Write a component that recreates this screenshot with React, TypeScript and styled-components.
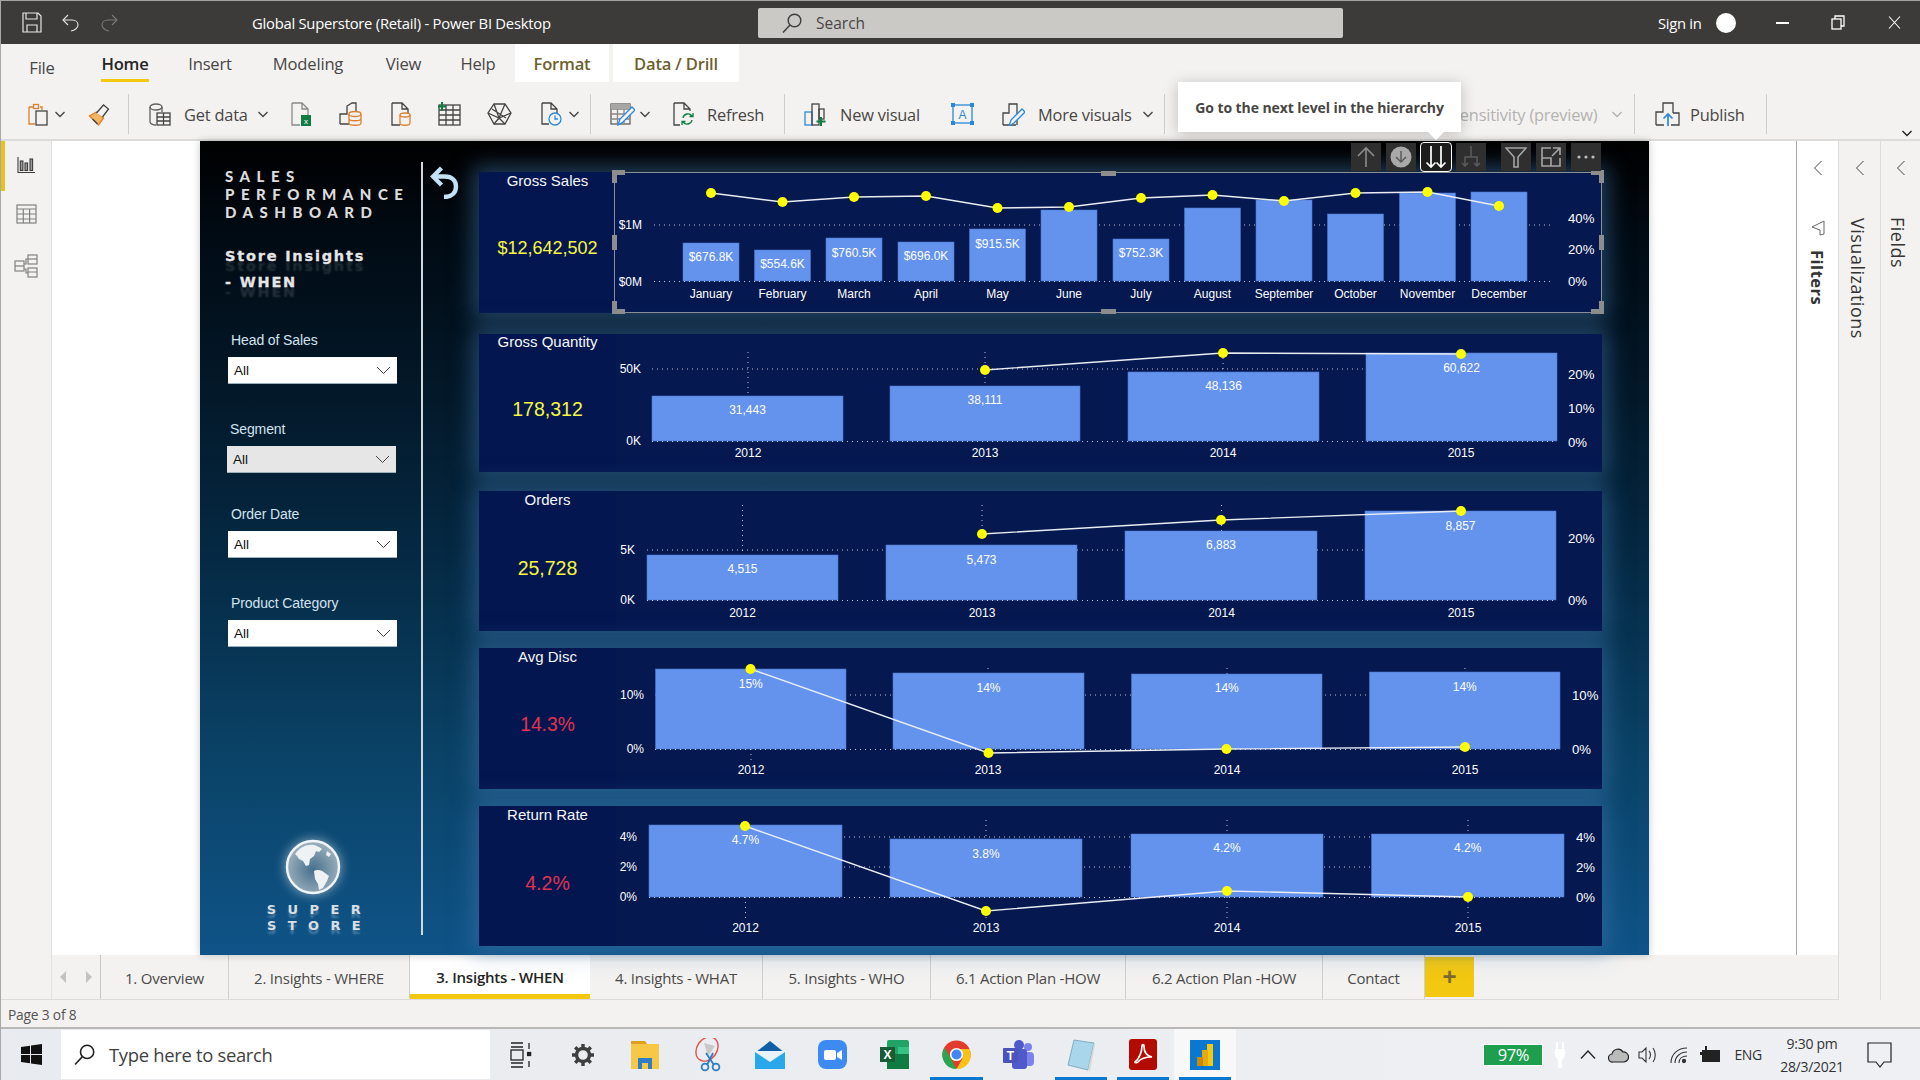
import React from "react";
import styled, { createGlobalStyle } from "styled-components";

const UI = `"Open Sans", "Noto Sans", sans-serif`;
const ARIAL = `"Liberation Sans", Arial, sans-serif`;

const Global = createGlobalStyle`
  html, body { margin: 0; padding: 0; width: 1920px; height: 1080px; overflow: hidden; background: #f3f2f1; }
  * { box-sizing: border-box; }
`;

const Frame = styled.div`
  width: 1920px; height: 1080px; display: flex; flex-direction: column;
  border-top: 1px solid #a3a3a3; border-left: 1px solid #a8a8a8; font-family: ${UI}; color: #3b3a39; overflow: hidden;
`;

/* ---------- title bar ---------- */
const TitleBar = styled.header`
  height: 43px; flex: none; background: #3c3b39; color: #fff; display: flex; align-items: center; position: relative;
`;
const QuickIcon = styled.span<{ $ml: number }>`
  margin-left: ${p => p.$ml}px; display: flex;
`;
const AppTitle = styled.span`
  margin-left: 134px; width: 400px; font-size: 14.8px; letter-spacing: -0.25px; white-space: nowrap;
`;
const SearchBox = styled.div`
  margin-left: 106px; width: 585px; height: 30px; background: #cbc9c6; border-radius: 2px; display: flex; align-items: center;
  padding-left: 24px; gap: 14px; color: #474747; font-size: 15.5px;
`;
const SignIn = styled.span`
  margin-left: 315px; font-size: 14.8px; letter-spacing: -0.3px; width: 57px;
`;
const Avatar = styled.span`
  width: 20px; height: 20px; border-radius: 50%; background: #fff; margin-left: 1px;
`;
const WinBtn = styled.span<{ $ml: number }>`
  margin-left: ${p => p.$ml}px; display: flex;
`;

/* ---------- ribbon ---------- */
const RibbonTabs = styled.nav`
  height: 38px; flex: none; display: flex; background: #f3f2f1;
`;
const RibbonTab = styled.span<{ $ml: number; $w: number; $ctx?: boolean; $on?: boolean; $low?: boolean }>`
  margin-left: ${p => p.$ml}px; width: ${p => p.$w}px; flex: none; height: 38px; display: flex; align-items: center; justify-content: center;
  font-size: 16.6px; letter-spacing: -0.2px; position: relative;
  padding-top: ${p => (p.$low ? 8 : 0)}px;
  background: ${p => (p.$ctx ? "#fff" : "transparent")};
  color: ${p => (p.$ctx ? "#6e5f2f" : p.$on ? "#252423" : "#484644")};
  font-weight: ${p => (p.$ctx || p.$on ? 600 : 400)};
  ${p => p.$on && `&::after{content:"";position:absolute;left:0;right:0;bottom:0;height:3px;background:#f2c811;}`}
`;
const Toolbar = styled.div`
  height: 59px; flex: none; display: flex; align-items: center; padding-top: 7px; background: #f3f2f1;
  border-bottom: 2px solid #dcdcdc; position: relative;
`;
const Tool = styled.span<{ $ml: number; $w?: number; $dim?: boolean; $end?: boolean }>`
  margin-left: ${p => p.$ml}px; ${p => (p.$w ? `width:${p.$w}px;` : "")} flex: none; display: flex; align-items: center;
  ${p => (p.$end ? "align-self: flex-end;" : "")}
  font-size: 16.4px; letter-spacing: -0.2px; white-space: nowrap; color: ${p => (p.$dim ? "#b4b2b0" : "#484644")};
`;
const Sep = styled.i<{ $ml: number }>`
  margin-left: ${p => p.$ml}px; width: 1px; height: 40px; background: #cfcdcb; flex: none;
`;
const Tooltip = styled.div`
  position: absolute; left: 1177px; top: 0; width: 283px; height: 50px; background: #fff; display: flex; align-items: center; justify-content: center;
  font-size: 14px; font-weight: 700; letter-spacing: -0.08px; color: #484644; box-shadow: 0 2px 14px rgba(0,0,0,.22); white-space: nowrap; z-index: 5;
  &::after { content: ""; position: absolute; left: 250px; top: 50px; border: 8px solid transparent; border-top-color: #fff; border-bottom: 0; }
`;

/* ---------- body ---------- */
const Body = styled.div`
  height: 859px; flex: none; display: flex;
`;
const MainColumn = styled.div`
  width: 1837px; flex: none; display: flex; flex-direction: column;
`;
const Upper = styled.div`
  height: 814px; flex: none; display: flex;
`;
const Rail = styled.aside`
  width: 51px; flex: none; background: #f3f2f1; border-right: 1px solid #e1dfdd; position: relative; display: flex; flex-direction: column; align-items: center; padding-top: 15px; gap: 30px;
  &::before { content: ""; position: absolute; left: 0; top: 0; width: 4px; height: 50px; background: #e8c31f; }
`;
const Work = styled.main`
  flex: 1; background: #fff; padding-left: 148px; display: flex;
`;
const Canvas = styled.section`
  width: 1449px; height: 814px; flex: none; position: relative; display: flex;
  background: linear-gradient(180deg, #000 0, #010b14 12%, #03192a 32%, #052a45 52%, #0a4266 75%, #0f5488 100%);
  box-shadow: 0 0 8px rgba(0,0,0,.22);
`;
const Sidebar = styled.div`
  width: 221px; flex: none; padding: 26px 0 0 25px; display: flex; flex-direction: column;
`;
const Headline = styled.div`
  font-family: Lato, "Open Sans", sans-serif; font-weight: 900; font-size: 15px; line-height: 18px; letter-spacing: 6.5px; color: #dcdcdc; white-space: nowrap;
`;
const SubHead = styled.div`
  margin-top: 22px; font-family: "DejaVu Sans", sans-serif; font-weight: 700; font-size: 14.5px; line-height: 26px; letter-spacing: 1.8px; color: #e6e6e6; white-space: nowrap;
  -webkit-text-stroke: 0.3px #e6e6e6; text-shadow: 0 10px 2px rgba(255,255,255,.14);
`;
const Slicer = styled.div<{ $mt: number; $nudge?: number }>`
  margin-top: ${p => p.$mt}px; margin-left: ${p => 3 + (p.$nudge ?? 0)}px; width: 169px;
`;
const SlicerLabel = styled.div`
  font-family: ${ARIAL}; font-size: 14px; line-height: 18px; padding-left: 3px; letter-spacing: -0.1px; color: #d3e3ef; white-space: nowrap;
`;
const SlicerBox = styled.div<{ $grey?: boolean }>`
  margin-top: 8px; height: 27px; background: ${p => (p.$grey ? "#e6e6e6" : "#fff")}; display: flex; align-items: center; justify-content: space-between;
  padding: 0 6px; font-family: ${ARIAL}; font-size: 13.5px; color: #111; border-bottom: 1px solid #9fb0bd;
`;
const Logo = styled.div`
  margin-top: 190px; margin-left: -10px; display: flex; flex-direction: column; align-items: center; width: 196px;
`;
const GlobeWrap = styled.span`
  display: flex; filter: drop-shadow(0 0 6px rgba(255,255,255,.55));
`;
const LogoWord = styled.div<{ $first?: boolean }>`
  margin-top: ${p => (p.$first ? 5 : 0)}px; font-family: "DejaVu Sans", sans-serif; font-weight: 700; font-size: 13px; line-height: 15.5px; letter-spacing: 11.4px; padding-left: 13px; color: #d9dfe3;
  text-shadow: 0 4px 2px rgba(255,255,255,.25);
`;
const Divider = styled.div`
  width: 2px; height: 773px; margin-top: 21px; flex: none; background: #cfd8de;
`;
const BackCol = styled.div`
  width: 56px; flex: none; padding: 25px 0 0 7px;
`;
const Rows = styled.div`
  width: 1123px; flex: none; padding-top: 31px; display: flex; flex-direction: column;
`;
const Row = styled.article<{ $h: number; $mt: number }>`
  height: ${p => p.$h}px; margin-top: ${p => p.$mt}px; flex: none; display: flex; position: relative;
  background: #051850; box-shadow: 0 0 20px 6px rgba(66,120,176,.5);
`;
const Kpi = styled.div`
  width: 137px; flex: none; display: flex; flex-direction: column; align-items: center; font-family: ${ARIAL}; background: #041650;
`;
const KpiTitle = styled.div<{ $mt: number }>`
  margin-top: ${p => p.$mt}px; font-size: 15px; line-height: 18px; color: #f6f6f6; white-space: nowrap;
`;
const KpiValue = styled.div<{ $bad?: boolean; $s: number; $mt: number }>`
  margin-top: ${p => p.$mt}px; font-size: ${p => p.$s}px; line-height: 24px; color: ${p => (p.$bad ? "#e03350" : "#f6f73f")}; white-space: nowrap;
`;
const ChartSvg = styled.svg`
  display: block; flex: none; font-family: ${ARIAL}; font-size: 12px; fill: #fff;
`;
const Selection = styled.div`
  position: absolute; left: 135px; top: 0; right: 0; bottom: 0; border: 1.5px solid #8b8f98; pointer-events: none;
`;
const Handle = styled.i<{ $x: number; $y: number; $w: number; $h: number }>`
  position: absolute; left: ${p => p.$x}px; top: ${p => p.$y}px; width: ${p => p.$w}px; height: ${p => p.$h}px; background: #8d8d8d;
`;
const VisualHeader = styled.div`
  position: absolute; top: 2px; left: 1151px; display: flex; gap: 5px; z-index: 3;
`;
const HeadBtn = styled.span<{ $on?: boolean; $gap?: boolean }>`
  width: 30px; height: 28px; display: flex; align-items: center; justify-content: center; background: #2f2f2f;
  margin-left: ${p => (p.$gap ? 10 : 0)}px;
  ${p => p.$on && "background:#1d1d1d;outline:1px solid #fff;border-radius:3px;"}
`;
const FilterPanel = styled.aside`
  width: 42px; flex: none; background: #fff; border-left: 1px solid #a9a9a9; display: flex; flex-direction: column; align-items: center; padding-top: 19px;
`;
const FunnelSlot = styled.span`
  margin-top: 44px; display: flex;
`;
const SidePanel = styled.aside<{ $w: number }>`
  width: ${p => p.$w}px; flex: none; background: #f3f2f1; border-left: 1px solid #dedcda; display: flex; flex-direction: column; align-items: center; padding-top: 19px; height: 100%;
`;
const VText = styled.span<{ $mt: number; $bold?: boolean; $s?: number; $mr?: number }>`
  margin-top: ${p => p.$mt}px; margin-right: ${p => p.$mr ?? 0}px; writing-mode: vertical-rl; font-size: ${p => p.$s ?? 18}px; color: #333; font-weight: ${p => (p.$bold ? 700 : 500)}; letter-spacing: .5px; white-space: nowrap;
`;

/* ---------- tabs ---------- */
const PageTabs = styled.nav`
  height: 45px; flex: none; display: flex; background: #f3f2f1; border-bottom: 1px solid #dedcda; padding-left: 50px;
`;
const TabArrows = styled.div`
  width: 50px; flex: none; border-left: 1px solid #e3e1df; border-right: 1px solid #c9c7c5; display: flex; align-items: center; justify-content: center; gap: 20px;
`;
const PageTab = styled.span<{ $w: number; $on?: boolean }>`
  width: ${p => p.$w}px; flex: none; display: flex; align-items: center; justify-content: center; font-size: 15px; letter-spacing: -0.22px; white-space: nowrap; padding-top: 1px;
  border-right: 1px solid #d2d0ce; color: ${p => (p.$on ? "#252423" : "#4b4a48")}; font-weight: ${p => (p.$on ? 600 : 400)};
  ${p => p.$on && "background:#fff;border-bottom:5px solid #f2c811;padding-top:5px;border-right:0;"}
`;
const AddTab = styled.span`
  width: 49px; height: 40px; margin-top: 2px; background: #f2c811; color: #7d6a33; font-family: ${ARIAL}; font-size: 24px; font-weight: 700; display: flex; align-items: center; justify-content: center;
`;
const StatusBar = styled.div`
  height: 29px; flex: none; padding: 2px 0 0 7px; display: flex; align-items: center; font-size: 13.8px; letter-spacing: -0.2px; color: #545352; background: #f3f2f1; border-bottom: 2px solid #b9b8b7;
`;

/* ---------- taskbar ---------- */
const Taskbar = styled.footer`
  height: 50px; flex: 1; display: flex; align-items: stretch; background: linear-gradient(90deg, #e8ebef, #eef0f3);
`;
const StartBtn = styled.span`
  width: 60px; flex: none; display: flex; align-items: center; justify-content: center;
`;
const TaskSearch = styled.div`
  width: 429px; flex: none; background: #fff; margin: 1px 0; display: flex; align-items: center; padding-left: 13px; gap: 14px; font-size: 18.4px; letter-spacing: -0.3px; color: #3f3f3f;
`;
const TaskSlot = styled.span<{ $on?: boolean; $bar?: boolean }>`
  width: 62.2px; flex: none; display: flex; align-items: center; justify-content: center; position: relative;
  background: ${p => (p.$on ? "#f8f8f8" : "transparent")};
  ${p => p.$bar && `&::after{content:"";position:absolute;left:5px;right:5px;bottom:0;height:3px;background:#0a78d0;}`}
`;
const Tray = styled.div`
  margin-left: auto; display: flex; align-items: center; padding-right: 28px; color: #333;
`;
const Battery = styled.span`
  width: 60px; height: 22px; border: 1px solid #fff; background: #1e9e4f; color: #fff; font-size: 16.5px; letter-spacing: -0.4px; display: flex; align-items: center; justify-content: center;
`;
const TrayIcon = styled.span<{ $ml: number }>`
  margin-left: ${p => p.$ml}px; display: flex;
`;
const TrayText = styled.span<{ $ml: number }>`
  margin-left: ${p => p.$ml}px; font-size: 14px; letter-spacing: -0.3px; white-space: nowrap;
`;
const Clock = styled.span`
  margin-left: 15px; width: 70px; display: flex; flex-direction: column; align-items: center; font-size: 14px; letter-spacing: -0.3px; line-height: 23px; white-space: nowrap;
`;

/* ---------- chart data ---------- */
type Bar = { a: number; b: number; t: number; label?: string; ly?: number };
type Chart = {
  top: number; h: number; base: number; left: number; right: number; grids: number[]; lx: number; la: { t: string; y: number }[]; rx: number; ra: { t: string; y: number }[];
  bars: Bar[]; line: [number, number][]; cats: { t: string; x: number }[]; cy: number; v?: [number, number, number][];
};
const months = ["January", "February", "March", "April", "May", "June", "July", "August", "September", "October", "November", "December"];
const mCenters = [711, 782.5, 854, 926, 997.5, 1069, 1141, 1212.5, 1284, 1355.5, 1427.5, 1499];
const mTops = [243, 250, 238, 242, 229, 210, 239, 208, 200, 214, 193, 192];
const mLabels: [string | undefined, number | undefined][] = [["$676.8K", 257], ["$554.6K", 264], ["$760.5K", 253], ["$696.0K", 256], ["$915.5K", 244], [undefined, undefined], ["$752.3K", 253], [undefined, undefined], [undefined, undefined], [undefined, undefined], [undefined, undefined], [undefined, undefined]];
const mLine = [193, 202, 197, 196, 208, 207, 198, 195, 201, 193, 192, 206];

const charts: Chart[] = [
  {
    top: 172, h: 141, base: 281, left: 654, right: 1552, grids: [225], lx: 642, la: [{ t: "$1M", y: 225 }, { t: "$0M", y: 282 }], rx: 1568,
    ra: [{ t: "40%", y: 218 }, { t: "20%", y: 249 }, { t: "0%", y: 281 }],
    bars: mCenters.map((c, i) => ({ a: c - 28, b: c + 28, t: mTops[i], label: mLabels[i][0], ly: mLabels[i][1] })),
    line: mCenters.map((c, i) => [c, mLine[i]]), cats: months.map((t, i) => ({ t, x: mCenters[i] })), cy: 294,
  },
  {
    top: 334, h: 138, base: 441, left: 652, right: 1557, grids: [369], lx: 641, la: [{ t: "50K", y: 369 }, { t: "0K", y: 441 }], rx: 1568,
    ra: [{ t: "20%", y: 374 }, { t: "10%", y: 408 }, { t: "0%", y: 442 }],
    bars: [{ a: 652, b: 843, t: 396, label: "31,443", ly: 410 }, { a: 890, b: 1080, t: 386, label: "38,111", ly: 400 }, { a: 1128, b: 1319, t: 372, label: "48,136", ly: 386 }, { a: 1366, b: 1557, t: 353, label: "60,622", ly: 368 }],
    line: [[985, 370], [1223, 353], [1461, 354]], cats: [{ t: "2012", x: 748 }, { t: "2013", x: 985 }, { t: "2014", x: 1223 }, { t: "2015", x: 1461 }], cy: 453,
    v: [[748, 352, 396], [985, 352, 386], [1223, 353, 372]],
  },
  {
    top: 491, h: 140, base: 600, left: 647, right: 1556, grids: [550], lx: 635, la: [{ t: "5K", y: 550 }, { t: "0K", y: 600 }], rx: 1568,
    ra: [{ t: "20%", y: 538 }, { t: "0%", y: 600 }],
    bars: [{ a: 647, b: 838, t: 555, label: "4,515", ly: 569 }, { a: 886, b: 1077, t: 545, label: "5,473", ly: 560 }, { a: 1125, b: 1317, t: 531, label: "6,883", ly: 545 }, { a: 1365, b: 1556, t: 511, label: "8,857", ly: 526 }],
    line: [[982, 534], [1221, 520], [1461, 511]], cats: [{ t: "2012", x: 742.5 }, { t: "2013", x: 982 }, { t: "2014", x: 1221.5 }, { t: "2015", x: 1461 }], cy: 613,
    v: [[742.5, 505, 555], [982, 505, 534], [1221.5, 505, 531]],
  },
  {
    top: 648, h: 141, base: 749, left: 655, right: 1560, grids: [695], lx: 644, la: [{ t: "10%", y: 695 }, { t: "0%", y: 749 }], rx: 1572,
    ra: [{ t: "10%", y: 695 }, { t: "0%", y: 749 }],
    bars: [{ a: 655.5, b: 846, t: 669, label: "15%", ly: 684 }, { a: 893, b: 1084, t: 673, label: "14%", ly: 688 }, { a: 1131.5, b: 1322, t: 674, label: "14%", ly: 688 }, { a: 1369.5, b: 1560, t: 672, label: "14%", ly: 687 }],
    line: [[750.5, 669], [988.5, 753], [1226.5, 749], [1465, 747]], cats: [{ t: "2012", x: 751 }, { t: "2013", x: 988 }, { t: "2014", x: 1227 }, { t: "2015", x: 1465 }], cy: 769.5,
    v: [[751, 749, 760], [988, 668, 673], [1227, 668, 674], [1465, 668, 672]],
  },
  {
    top: 806, h: 140, base: 897, left: 649, right: 1564, grids: [837, 867], lx: 637, la: [{ t: "4%", y: 837 }, { t: "2%", y: 867 }, { t: "0%", y: 897 }], rx: 1576,
    ra: [{ t: "4%", y: 837 }, { t: "2%", y: 867 }, { t: "0%", y: 897 }],
    bars: [{ a: 649, b: 842, t: 825, label: "4.7%", ly: 840 }, { a: 890, b: 1082, t: 839, label: "3.8%", ly: 854 }, { a: 1131, b: 1323, t: 834, label: "4.2%", ly: 848 }, { a: 1371.5, b: 1564, t: 834, label: "4.2%", ly: 848 }],
    line: [[745, 826], [986, 911], [1227, 891], [1468, 897]], cats: [{ t: "2012", x: 745.5 }, { t: "2013", x: 986 }, { t: "2014", x: 1227 }, { t: "2015", x: 1468 }], cy: 928,
    v: [[745.5, 897, 918], [986, 820, 839], [1227, 820, 834], [1468, 820, 834], [986, 912, 918], [1227, 897, 918], [1468, 897, 918]],
  },
];

const kpis = [
  { title: "Gross Sales", value: "$12,642,502", s: 18, bad: false, tm: 0, mt: 46 },
  { title: "Gross Quantity", value: "178,312", s: 19.5, bad: false, tm: -1, mt: 46 },
  { title: "Orders", value: "25,728", s: 19.5, bad: false, tm: 0, mt: 47 },
  { title: "Avg Disc", value: "14.3%", s: 19.3, bad: true, tm: 0, mt: 47 },
  { title: "Return Rate", value: "4.2%", s: 19.6, bad: true, tm: 0, mt: 47 },
];
const rowGeom = [[141, 0], [138, 21], [140, 19], [141, 17], [140, 17]];

const dots = { stroke: "#fff", strokeOpacity: 0.75, strokeWidth: 1, strokeDasharray: "1 4" };

function ChartView({ c }: { c: Chart }) {
  return (
    <ChartSvg width={986} height={c.h} viewBox={`616 ${c.top} 986 ${c.h}`}>
      {c.grids.map(y => <line key={y} x1={c.left} x2={c.right} y1={y} y2={y} {...dots} />)}
      {c.v?.map((v, i) => <line key={i} x1={v[0]} x2={v[0]} y1={v[1]} y2={v[2]} {...dots} />)}
      {c.bars.map((b, i) => <rect key={i} x={b.a} y={b.t} width={b.b - b.a} height={c.base - b.t} fill="#6493ee" stroke="#4a75cc" strokeWidth={0.6} />)}
      <line x1={c.left} x2={c.right} y1={c.base + 0.5} y2={c.base + 0.5} {...dots} />
      {c.la.map(l => <text key={l.t} x={c.lx} y={l.y} textAnchor="end" dominantBaseline="central">{l.t}</text>)}
      {c.ra.map(l => <text key={l.t} x={c.rx} y={l.y} fontSize={13.2} dominantBaseline="central">{l.t}</text>)}
      {c.cats.map(l => <text key={l.t} x={l.x} y={c.cy} textAnchor="middle" dominantBaseline="central">{l.t}</text>)}
      {c.bars.map((b, i) => b.label ? <text key={i} x={(b.a + b.b) / 2} y={b.ly} textAnchor="middle" dominantBaseline="central">{b.label}</text> : null)}
      <polyline points={c.line.map(p => p.join(",")).join(" ")} fill="none" stroke="#e9edf2" strokeWidth={1.4} />
      {c.line.map((p, i) => <circle key={i} cx={p[0]} cy={p[1]} r={5} fill="#ffff00" />)}
    </ChartSvg>
  );
}

/* ---------- icons ---------- */
const G = "#605e5c";
const O = "#d9812f";
type IP = { w?: number; h?: number; children: React.ReactNode; vb?: string };
const Svg = ({ w = 24, h = 24, vb = "0 0 24 24", children }: IP) => (
  <svg width={w} height={h} viewBox={vb} fill="none" strokeWidth={1.3} stroke={G}>{children}</svg>
);
const Chev = ({ c = "#484644", s = 12 }: { c?: string; s?: number }) => (
  <svg width={s} height={s} viewBox="0 0 12 12" fill="none" stroke={c} strokeWidth={1.4}><path d="M1.5 4l4.5 4.5L10.5 4" /></svg>
);
const SliceChev = () => (
  <svg width={15} height={9} viewBox="0 0 15 9" fill="none" stroke="#444" strokeWidth={1}><path d="M1 1l6.5 6.5L14 1" /></svg>
);
const ClipIcon = () => (<Svg><path d="M3 5h5M14 5h2v3M3 5v17h6" stroke={O} /><rect x="7.5" y="2.5" width="5" height="4" stroke={O} /><rect x="10" y="9" width="11" height="14" fill="#f3f2f1" stroke="#444" /></Svg>);
const BrushIcon = () => (<Svg w={25}><path d="M2 14l9 9 5-7-7-6z" fill="#f2b661" stroke={O} /><path d="M5 17l5 5M9 11l7-8 5 4-6 8" stroke="#444" fill="#f3f2f1" /></Svg>);
const GetDataIcon = () => (<Svg><ellipse cx="8" cy="5" rx="6" ry="3" /><path d="M2 5v15c0 1.5 3 3 6 3M14 5v5" /><rect x="9" y="11" width="13" height="12" fill="#f3f2f1" stroke="#444" /><path d="M9 15h13M9 19h13M15.5 11v12" stroke="#444" /></Svg>);
const ExcelIcon = () => (<Svg w={22} vb="0 0 22 24"><path d="M2 1h10l6 6v8M12 1v6h6M2 1v22h8" stroke="#8a8886" /><rect x="11" y="13" width="10" height="11" fill="#107c41" stroke="none" /><text x="16" y="22" fontSize="8" fill="#fff" stroke="none" textAnchor="middle" fontFamily={ARIAL}>x</text></Svg>);
const DbGroupIcon = () => (<Svg><path d="M2 22V12h7v-8l5-3h4v8M2 22h9" stroke="#444" /><ellipse cx="17" cy="12" rx="6" ry="2.5" stroke={O} /><path d="M11 12v9c0 3 12 3 12 0v-9M11 16.5c0 3 12 3 12 0" stroke={O} /></Svg>);
const FileDbIcon = () => (<Svg w={22} vb="0 0 22 24"><path d="M2 1h10l6 6v4M12 1v6h6M2 1v22h8" stroke="#444" /><ellipse cx="15" cy="13" rx="5" ry="2" stroke={O} /><path d="M10 13v8c0 3 10 3 10 0v-8" stroke={O} /></Svg>);
const TableAddIcon = () => (<Svg w={25} vb="0 0 25 24"><rect x="2" y="3" width="21" height="20" stroke="#444" /><path d="M2 8h21M2 13h21M2 18h21M9 3v20M16 3v20" stroke="#444" /><path d="M5 0v9M1 4.5h8" stroke="#107c41" strokeWidth="2" /></Svg>);
const HexIcon = () => (<Svg w={25} vb="0 0 25 24"><path d="M7 2h11l6 9-6 11H7L1 11z" stroke="#444" /><path d="M1 11l11 5 12-5M7 2l5 14 6-14M7 22l5-6 6 6M5 7l14 9" stroke="#444" /></Svg>);
const FileClockIcon = () => (<Svg w={22} vb="0 0 22 24"><path d="M2 1h9l6 6v4M11 1v6h6M2 1v21h7" stroke="#444" /><circle cx="15" cy="17" r="6" stroke="#2b88d8" /><path d="M15 13.5V17h3" stroke="#2b88d8" /></Svg>);
const EditTableIcon = () => (<Svg w={25} vb="0 0 25 24"><rect x="1" y="2" width="19" height="20" stroke="#605e5c" /><path d="M1 7h19M1 12h19M1 17h19M7.5 2v20M14 2v20" stroke="#8a8886" /><rect x="1" y="2" width="19" height="5" fill="#a8a6a4" stroke="none" /><path d="M8 23l2-6 12-12 3 3-12 12z" fill="#f3f2f1" stroke="#2b88d8" /></Svg>);
const RefreshIcon = () => (<Svg w={23} vb="0 0 23 24"><path d="M2 1h10l6 6v2M12 1v6h6M2 1v22h6" stroke="#444" /><path d="M11 16a5 5 0 0 1 9-2M21 11v3.5h-3.5M20 18a5 5 0 0 1-9 2M10 23v-3.5h3.5" stroke="#107c41" /></Svg>);
const NewVisualIcon = () => (<Svg w={22} vb="0 0 22 24"><rect x="1" y="10" width="7" height="13" stroke="#2b88d8" /><rect x="8" y="2" width="7" height="21" stroke="#444" /><rect x="15" y="7" width="5" height="10" stroke="#444" /><path d="M17 15v9M12.5 19.5h9" stroke="#107c41" strokeWidth="2" /></Svg>);
const TextBoxIcon = () => (<Svg w={25} vb="0 0 25 24"><rect x="3" y="3" width="19" height="18" stroke="#2b88d8" /><rect x="1" y="1" width="4" height="4" fill="#2b88d8" stroke="none" /><rect x="20" y="1" width="4" height="4" fill="#2b88d8" stroke="none" /><rect x="1" y="19" width="4" height="4" fill="#2b88d8" stroke="none" /><rect x="20" y="19" width="4" height="4" fill="#2b88d8" stroke="none" /><text x="12.5" y="16.5" textAnchor="middle" fontSize="12" fill="#2b88d8" stroke="none" fontFamily={ARIAL}>A</text></Svg>);
const MoreVisualsIcon = () => (<Svg w={23} vb="0 0 23 24"><path d="M1 23V11h6V2h8v10M1 23h13M15 23V18" stroke="#444" /><path d="M7 24l2-6 11-11 3 3-11 11z" fill="#f3f2f1" stroke="#2b88d8" /></Svg>);
const PublishIcon = () => (<Svg w={25} vb="0 0 25 24"><path d="M1 23V10h7V1h10v10M1 23h8M16 23h2" stroke="#444" /><path d="M13 24V12M8.5 16.5L13 12l4.5 4.5" stroke="#2b88d8" strokeWidth="1.7" /><path d="M18 11h6v12h-6" stroke="#444" /></Svg>);

const UpArrow = () => (<svg width={20} height={22} viewBox="0 0 20 22" fill="none" stroke="#8c8c8c" strokeWidth={1.6}><path d="M10 21V2M2 10l8-8 8 8" /></svg>);
const DownCircle = () => (<svg width={22} height={22} viewBox="0 0 22 22"><circle cx="11" cy="11" r="10.5" fill="#a9a9a9" /><path d="M11 5v11M6 11l5 5 5-5" fill="none" stroke="#555" strokeWidth={1.4} /></svg>);
const DoubleDown = () => (<svg width={22} height={24} viewBox="0 0 22 24" fill="none" strokeWidth={1.7} stroke="#fff"><path d="M6 1v21M1.5 17.5L6 22l4.5-4.5M16 1v21M11.5 17.5L16 22l4.5-4.5" /></svg>);
const Fork = () => (<svg width={22} height={24} viewBox="0 0 22 24" fill="none" strokeWidth={1.5} stroke="#5c5c5c"><path d="M11 1v11M5 21v-9h12v9M2 18l3 3 3-3M14 18l3 3 3-3" /></svg>);
const Funnel = () => (<svg width={22} height={22} viewBox="0 0 22 22" fill="none" strokeWidth={1.6} stroke="#a5a5a5"><path d="M1 2h20l-8 9v10h-4V11z" /></svg>);
const Focus = () => (<svg width={22} height={22} viewBox="0 0 22 22" fill="none" strokeWidth={1.6} stroke="#a5a5a5"><path d="M11 2H2v18h18v-8M2 12h9v8M13 2h7v7M20 2l-8 8" /></svg>);
const More = () => (<svg width={20} height={6} viewBox="0 0 20 6" fill="#bdbdbd"><circle cx="3" cy="3" r="1.6" /><circle cx="10" cy="3" r="1.6" /><circle cx="17" cy="3" r="1.6" /></svg>);

const Back = () => (
  <svg width={29} height={33} viewBox="0 0 29 33" fill="none" stroke="#c5e2f6" strokeWidth={4.4}><path d="M11.5 2L3 10.5 11.5 19" /><path d="M3 10.5h12c7 0 11 4 11 10s-4 10.5-12 10.5" /></svg>
);
const ReportIcon = () => (<svg width={18} height={18} viewBox="0 0 18 18" fill="none" stroke="#3c3c3c" strokeWidth={1.1}><path d="M1 1v15.5h17" /><rect x="3.3" y="5" width="2.6" height="9.5" fill="#999" /><rect x="8" y="7" width="2.6" height="7.5" fill="#999" /><rect x="13" y="3" width="2.6" height="11.5" fill="#999" /></svg>);
const GridIcon = () => (<svg width={21} height={20} viewBox="0 0 21 20" fill="none" stroke="#808080" strokeWidth={1.2}><rect x="1" y="1" width="19" height="18" /><path d="M1 5h19M1 10h19M1 15h19M7.3 5v14M13.6 5v14" /></svg>);
const ModelIcon = () => (<svg width={24} height={24} viewBox="0 0 24 24" fill="none" stroke="#808080" strokeWidth={1.2}><rect x="1" y="7" width="9" height="10" /><path d="M1 12h9" /><rect x="14" y="1" width="9" height="9" /><path d="M14 5h9" /><rect x="14" y="14" width="9" height="9" /><path d="M14 18h9M10 10h2V5h2M10 15h2v4h2" /></svg>);
const PanelChev = () => (<svg width={10} height={16} viewBox="0 0 10 16" fill="none" stroke="#444" strokeWidth={1}><path d="M8.5 1L1.5 8l7 7" /></svg>);
const TabArrow = ({ left }: { left?: boolean }) => (<svg width={6} height={12} viewBox="0 0 6 12" fill="#c2c2c2"><path d={left ? "M6 0L0 6l6 6z" : "M0 0l6 6-6 6z"} /></svg>);
const FunnelSmall = () => (<svg width={14} height={16} viewBox="0 0 14 16" fill="none" stroke="#666" strokeWidth={1}><path d="M13 1L1 7l8 3v5l4 -1z" /></svg>);
const Mag = ({ c, s }: { c: string; s: number }) => (<svg width={s} height={s} viewBox="0 0 20 20" fill="none" stroke={c} strokeWidth={1.5}><circle cx="12.5" cy="7.5" r="6.3" /><path d="M8 12L1 19.5" /></svg>);

const Globe = () => (
  <svg width={60} height={60} viewBox="0 0 60 60">
    <defs><radialGradient id="gl" cx="50%" cy="55%" r="55%"><stop offset="0" stopColor="#46708c" /><stop offset="1" stopColor="#9fb2bf" /></radialGradient></defs>
    <circle cx="30" cy="30" r="26" fill="url(#gl)" stroke="#f2f5f7" strokeWidth="2.4" />
    <path d="M12 17c5-7 12-10 19-9 3 1 6 2 8 4l-3 3-3-1-2 5-4 3-1 6-3 1-3-5-4-2-2-3z" fill="#eef2f5" />
    <path d="M31 34c3-2 8-1 11 2l4 3-2 5-4 7-4 2-1-6-3-5z" fill="#eef2f5" />
    <path d="M44 14l4 3-2 3-3-2z" fill="#eef2f5" />
  </svg>
);

const WinLogo = () => (<svg width={21} height={21} viewBox="0 0 21 21" fill="#111"><path d="M0 3l9-1.2V10H0zM10 1.6L21 0v10H10zM0 11h9v8.2L0 18zM10 11h11v10l-11-1.6z" /></svg>);
const TaskView = () => (<svg width={22} height={26} viewBox="0 0 22 26" fill="none" stroke="#222" strokeWidth={1.3}><path d="M1 1h12M1 5h12M1 21h12M1 25h12" /><rect x="1" y="8" width="12" height="10" /><path d="M19 1v6M19 19v6" /><rect x="17.6" y="10.5" width="3" height="3" fill="#222" /></svg>);
const Gear = () => (<svg width={24} height={24} viewBox="0 0 24 24" fill="none" stroke="#3f3f3f"><circle cx="12" cy="12" r="6.5" strokeWidth="3.4" /><path d="M12 1v4M12 19v4M1 12h4M19 12h4M4.2 4.2l2.8 2.8M17 17l2.8 2.8M19.8 4.2L17 7M7 17l-2.8 2.8" strokeWidth="3.4" /></svg>);
const Explorer = () => (<svg width={28} height={32} viewBox="0 0 28 32"><path d="M0 2h14l2 3h12v25H0z" fill="#f6c845" /><path d="M0 2h14l2 3H0z" fill="#dca120" /><path d="M7 30V19h14v11h-4v-6h-6v6z" fill="#2f7dc4" /></svg>);
const Snip = () => (<svg width={30} height={34} viewBox="0 0 30 34" fill="none"><ellipse cx="14" cy="11" rx="10" ry="13" transform="rotate(35 14 11)" stroke="#e0524d" strokeWidth="1.4" /><path d="M11 5l4 13 7-10z" fill="#c8c8c8" /><path d="M13 15l8 12M20 15l-6 12" stroke="#2f7dc4" strokeWidth="1.8" /><circle cx="12" cy="29" r="3.4" stroke="#2f7dc4" strokeWidth="1.8" /><circle cx="23" cy="29" r="3.4" stroke="#2f7dc4" strokeWidth="1.8" /></svg>);
const Mail = () => (<svg width={30} height={28} viewBox="0 0 30 28"><path d="M15 0l15 12H0z" fill="#0f5ea8" /><rect y="11" width="30" height="17" fill="#28a8ea" /><path d="M0 11l15 10 15-10v-1H0z" fill="#e8f2fb" /></svg>);
const ZoomApp = () => (<svg width={29} height={29} viewBox="0 0 29 29"><rect width="29" height="29" rx="8" fill="#3d8bf2" /><rect x="6" y="10" width="12" height="10" rx="2" fill="#fff" /><path d="M19 13l5-3v10l-5-3z" fill="#fff" /></svg>);
const ExcelApp = () => (<svg width={29} height={29} viewBox="0 0 29 29"><rect x="7" width="22" height="29" rx="2" fill="#21a366" /><rect x="18" y="7" width="11" height="7" fill="#33c481" /><rect x="7" y="14" width="22" height="15" fill="#107c41" /><rect y="7" width="15" height="15" fill="#185c37" /><text x="7.5" y="19" fontSize="12" fontWeight="700" textAnchor="middle" fill="#fff" fontFamily={ARIAL}>X</text></svg>);
const Chrome = () => (<svg width={29} height={29} viewBox="0 0 29 29"><circle cx="14.5" cy="14.5" r="14" fill="#e33b2e" /><path d="M2.4 7.5L9 18.5 14.5 29a14 14 0 0 1-12-21.5z" fill="#2aa44f" /><path d="M14.5 29l6-10.5L14.5 9h13A14 14 0 0 1 14.5 29z" fill="#fbc116" /><circle cx="14.5" cy="14.5" r="6.6" fill="#fff" /><circle cx="14.5" cy="14.5" r="5" fill="#4286f5" /></svg>);
const Teams = () => (<svg width={32} height={30} viewBox="0 0 32 30"><circle cx="25" cy="7" r="4" fill="#7b83eb" /><rect x="20" y="12" width="11" height="14" rx="4" fill="#7b83eb" /><circle cx="16" cy="5" r="5" fill="#5059c9" /><rect x="9" y="9" width="15" height="20" rx="3" fill="#5059c9" /><rect y="8" width="15" height="15" rx="1" fill="#4b53bc" /><text x="7.5" y="20" fontSize="12" fontWeight="700" textAnchor="middle" fill="#fff" fontFamily={ARIAL}>T</text></svg>);
const Notepad = () => (<svg width={30} height={32} viewBox="0 0 30 32"><path d="M8 1l20 3-6 27-20-5z" fill="#a9d6ea" stroke="#6d9fb4" strokeWidth=".8" /><path d="M22 31l6-27 1 3-5 25z" fill="#d9d9d9" /></svg>);
const Acrobat = () => (<svg width={28} height={31} viewBox="0 0 28 31"><rect width="28" height="31" rx="3" fill="#b30b00" /><path d="M6 23c4-3 7-10 7-16 0-2 2-2 2 0 0 6 3 10 8 11-5 0-11 1-14 5-1 1-3 1-3 0z" fill="none" stroke="#fff" strokeWidth="1.7" /></svg>);
const PowerBI = () => (<svg width={30} height={30} viewBox="0 0 30 30"><rect width="30" height="30" fill="#0a78d0" /><rect x="17" y="4" width="6" height="22" fill="#f2c811" /><rect x="12" y="10" width="6" height="16" fill="#e8a90f" /><rect x="7" y="17" width="6" height="9" fill="#c98a0a" /></svg>);
const Plug = () => (<svg width={10} height={26} viewBox="0 0 10 26" fill="#fff"><rect x="1" y="0" width="2" height="7" /><rect x="7" y="0" width="2" height="7" /><path d="M0 7h10v7l-3 4v8H3v-8L0 14z" /></svg>);
const Caret = () => (<svg width={16} height={9} viewBox="0 0 16 9" fill="none" stroke="#222" strokeWidth={1.3}><path d="M1 8.5L8 1l7 7.5" /></svg>);
const Cloud = () => (<svg width={21} height={17} viewBox="0 0 21 17" fill="#bbb" stroke="#222" strokeWidth={1.2}><path d="M5 16a4 4 0 0 1-1-8 6 6 0 0 1 11-2 5 5 0 0 1 1 10z" /></svg>);
const Speaker = () => (<svg width={22} height={18} viewBox="0 0 22 18" fill="none" stroke="#333" strokeWidth={1.1}><path d="M1 6h3l4-4v14l-4-4H1zM11 5c2 2 2 6 0 8M15 2c3 4 3 10 0 14" /></svg>);
const Wifi = () => (<svg width={18} height={18} viewBox="0 0 18 18" fill="none" stroke="#333" strokeWidth={1.1}><path d="M1 17C1 8 8 2 17 2M5 17C5 11 10 6 17 6M9 17c0-4 3-7 8-7" /><circle cx="14" cy="15" r="1.6" fill="#333" /></svg>);
const BatteryIcon = () => (<svg width={20} height={18} viewBox="0 0 20 18" fill="#222"><rect x="2" y="4" width="18" height="12" /><rect x="0" y="6" width="3" height="3" /><rect x="5" y="0" width="2" height="4" /></svg>);
const Notif = () => (<svg width={25} height={26} viewBox="0 0 25 26" fill="none" stroke="#222" strokeWidth={1.2}><path d="M1 1h23v19h-7l-4 5-4-5H1z" /></svg>);

export default function App() {
  return (
    <>
      <Global />
      <Frame>
        <TitleBar>
          <QuickIcon $ml={21}>
            <svg width={20} height={21} viewBox="0 0 20 21" fill="none" stroke="#e6e6e6" strokeWidth={1.2}><path d="M1 1h15l3 3v16H1zM4 1v6h11V1M5 20v-7h10v7" /></svg>
          </QuickIcon>
          <QuickIcon $ml={20}>
            <svg width={18} height={18} viewBox="0 0 18 18" fill="none" stroke="#e6e6e6" strokeWidth={1.1}><path d="M6 1L1 6l5 5" /><path d="M1 6h9c4 0 6 2.5 6 5s-3 5.5-7 6" /></svg>
          </QuickIcon>
          <QuickIcon $ml={20}>
            <svg width={18} height={18} viewBox="0 0 18 18" fill="none" stroke="#7b7a78" strokeWidth={1.1}><path d="M12 1l5 5-5 5" /><path d="M17 6H8C4 6 2 8.5 2 11s3 5.5 7 6" /></svg>
          </QuickIcon>
          <AppTitle>Global Superstore (Retail) - Power BI Desktop</AppTitle>
          <SearchBox><Mag c="#3f3f3f" s={20} />Search</SearchBox>
          <SignIn>Sign in</SignIn>
          <Avatar />
          <WinBtn $ml={40}><svg width={13} height={2} viewBox="0 0 13 2" fill="#fff"><rect width="13" height="2" /></svg></WinBtn>
          <WinBtn $ml={42}><svg width={14} height={15} viewBox="0 0 14 15" fill="none" stroke="#fff" strokeWidth={1.3}><rect x="1" y="4" width="9" height="10" /><path d="M4 4V1h9v10h-3" /></svg></WinBtn>
          <WinBtn $ml={43}><svg width={13} height={13} viewBox="0 0 13 13" fill="none" stroke="#fff" strokeWidth={1.1}><path d="M1 .5l11 12M12 .5l-11 12" /></svg></WinBtn>
        </TitleBar>

        <RibbonTabs>
          <RibbonTab $ml={28} $w={26} $low>File</RibbonTab>
          <RibbonTab $ml={46} $w={48} $on>Home</RibbonTab>
          <RibbonTab $ml={39} $w={44}>Insert</RibbonTab>
          <RibbonTab $ml={39} $w={74}>Modeling</RibbonTab>
          <RibbonTab $ml={40} $w={37}>View</RibbonTab>
          <RibbonTab $ml={38} $w={36}>Help</RibbonTab>
          <RibbonTab $ml={19} $w={94} $ctx>Format</RibbonTab>
          <RibbonTab $ml={4} $w={126} $ctx>Data / Drill</RibbonTab>
        </RibbonTabs>

        <Toolbar>
          <Tool $ml={25}><ClipIcon /></Tool>
          <Tool $ml={4}><Chev /></Tool>
          <Tool $ml={21}><BrushIcon /></Tool>
          <Sep $ml={16} />
          <Tool $ml={19}><GetDataIcon /></Tool>
          <Tool $ml={12} $w={66}>Get data</Tool>
          <Tool $ml={7}><Chev /></Tool>
          <Tool $ml={21}><ExcelIcon /></Tool>
          <Tool $ml={26}><DbGroupIcon /></Tool>
          <Tool $ml={28}><FileDbIcon /></Tool>
          <Tool $ml={25}><TableAddIcon /></Tool>
          <Tool $ml={25}><HexIcon /></Tool>
          <Tool $ml={28}><FileClockIcon /></Tool>
          <Tool $ml={6}><Chev /></Tool>
          <Sep $ml={10} />
          <Tool $ml={19}><EditTableIcon /></Tool>
          <Tool $ml={4}><Chev /></Tool>
          <Tool $ml={21}><RefreshIcon /></Tool>
          <Tool $ml={12} $w={56}>Refresh</Tool>
          <Sep $ml={21} />
          <Tool $ml={19}><NewVisualIcon /></Tool>
          <Tool $ml={14} $w={82}>New visual</Tool>
          <Tool $ml={28}><TextBoxIcon /></Tool>
          <Tool $ml={27}><MoreVisualsIcon /></Tool>
          <Tool $ml={13} $w={96}>More visuals</Tool>
          <Tool $ml={8}><Chev /></Tool>
          <Sep $ml={10} />
          <Tool $ml={286} $w={152} $dim>Sensitivity (preview)</Tool>
          <Tool $ml={8}><Chev c="#b4b2b0" /></Tool>
          <Sep $ml={11} />
          <Tool $ml={20}><PublishIcon /></Tool>
          <Tool $ml={10} $w={56}>Publish</Tool>
          <Sep $ml={20} />
          <Tool $ml={134} $end><Chev c="#222" /></Tool>
          <Tooltip>Go to the next level in the hierarchy</Tooltip>
        </Toolbar>

        <Body>
          <MainColumn>
            <Upper>
              <Rail><ReportIcon /><GridIcon /><ModelIcon /></Rail>
              <Work>
                <Canvas>
                  <Sidebar>
                    <Headline>SALES<br />PERFORMANCE<br />DASHBOARD</Headline>
                    <SubHead>Store Insights<br />- WHEN</SubHead>
                    <Slicer $mt={36}><SlicerLabel>Head of Sales</SlicerLabel><SlicerBox>All<SliceChev /></SlicerBox></Slicer>
                    <Slicer $mt={36} $nudge={-1}><SlicerLabel>Segment</SlicerLabel><SlicerBox $grey>All<SliceChev /></SlicerBox></Slicer>
                    <Slicer $mt={32}><SlicerLabel>Order Date</SlicerLabel><SlicerBox>All<SliceChev /></SlicerBox></Slicer>
                    <Slicer $mt={36}><SlicerLabel>Product Category</SlicerLabel><SlicerBox>All<SliceChev /></SlicerBox></Slicer>
                    <Logo>
                      <GlobeWrap><Globe /></GlobeWrap>
                      <LogoWord $first>SUPER</LogoWord>
                      <LogoWord>STORE</LogoWord>
                    </Logo>
                  </Sidebar>
                  <Divider />
                  <BackCol><Back /></BackCol>
                  <Rows>
                    {charts.map((c, i) => (
                      <Row key={i} $h={rowGeom[i][0]} $mt={rowGeom[i][1]}>
                        <Kpi>
                          <KpiTitle $mt={kpis[i].tm}>{kpis[i].title}</KpiTitle>
                          <KpiValue $bad={kpis[i].bad} $s={kpis[i].s} $mt={kpis[i].mt}>{kpis[i].value}</KpiValue>
                        </Kpi>
                        <ChartView c={c} />
                        {i === 0 && (
                          <Selection>
                            <Handle $x={-3} $y={-3} $w={13} $h={5} /><Handle $x={-3} $y={-3} $w={5} $h={13} />
                            <Handle $x={976} $y={-3} $w={13} $h={5} /><Handle $x={984} $y={-3} $w={5} $h={13} />
                            <Handle $x={-3} $y={136} $w={13} $h={5} /><Handle $x={-3} $y={128} $w={5} $h={13} />
                            <Handle $x={976} $y={136} $w={13} $h={5} /><Handle $x={984} $y={128} $w={5} $h={13} />
                            <Handle $x={486} $y={-2} $w={15} $h={5} /><Handle $x={486} $y={136} $w={15} $h={5} />
                            <Handle $x={-3} $y={62} $w={5} $h={15} /><Handle $x={984} $y={62} $w={5} $h={15} />
                          </Selection>
                        )}
                      </Row>
                    ))}
                  </Rows>
                  <VisualHeader>
                    <HeadBtn><UpArrow /></HeadBtn>
                    <HeadBtn><DownCircle /></HeadBtn>
                    <HeadBtn $on><DoubleDown /></HeadBtn>
                    <HeadBtn><Fork /></HeadBtn>
                    <HeadBtn $gap><Funnel /></HeadBtn>
                    <HeadBtn><Focus /></HeadBtn>
                    <HeadBtn><More /></HeadBtn>
                  </VisualHeader>
                </Canvas>
              </Work>
              <FilterPanel>
                <PanelChev />
                <FunnelSlot><FunnelSmall /></FunnelSlot>
                <VText $mt={14} $bold $s={16.5}>Filters</VText>
              </FilterPanel>
            </Upper>
            <PageTabs>
              <TabArrows><TabArrow left /><TabArrow /></TabArrows>
              <PageTab $w={128}>1. Overview</PageTab>
              <PageTab $w={181}>2. Insights - WHERE</PageTab>
              <PageTab $w={180} $on>3. Insights - WHEN</PageTab>
              <PageTab $w={173}>4. Insights - WHAT</PageTab>
              <PageTab $w={168}>5. Insights - WHO</PageTab>
              <PageTab $w={195}>6.1 Action Plan -HOW</PageTab>
              <PageTab $w={197}>6.2 Action Plan -HOW</PageTab>
              <PageTab $w={102}>Contact</PageTab>
              <AddTab>+</AddTab>
            </PageTabs>
          </MainColumn>
          <SidePanel $w={42}><PanelChev /><VText $mt={42} $mr={4}>Visualizations</VText></SidePanel>
          <SidePanel $w={40}><PanelChev /><VText $mt={41} $mr={6}>Fields</VText></SidePanel>
        </Body>

        <StatusBar>Page 3 of 8</StatusBar>

        <Taskbar>
          <StartBtn><WinLogo /></StartBtn>
          <TaskSearch><Mag c="#222" s={21} />Type here to search</TaskSearch>
          <TaskSlot><TaskView /></TaskSlot>
          <TaskSlot><Gear /></TaskSlot>
          <TaskSlot><Explorer /></TaskSlot>
          <TaskSlot><Snip /></TaskSlot>
          <TaskSlot><Mail /></TaskSlot>
          <TaskSlot><ZoomApp /></TaskSlot>
          <TaskSlot><ExcelApp /></TaskSlot>
          <TaskSlot $bar><Chrome /></TaskSlot>
          <TaskSlot><Teams /></TaskSlot>
          <TaskSlot $bar><Notepad /></TaskSlot>
          <TaskSlot $bar><Acrobat /></TaskSlot>
          <TaskSlot $on $bar><PowerBI /></TaskSlot>
          <Tray>
            <Battery>97%</Battery>
            <TrayIcon $ml={12}><Plug /></TrayIcon>
            <TrayIcon $ml={15}><Caret /></TrayIcon>
            <TrayIcon $ml={12}><Cloud /></TrayIcon>
            <TrayIcon $ml={9}><Speaker /></TrayIcon>
            <TrayIcon $ml={10}><Wifi /></TrayIcon>
            <TrayIcon $ml={12}><BatteryIcon /></TrayIcon>
            <TrayText $ml={14}>ENG</TrayText>
            <Clock><span>9:30 pm</span><span>28/3/2021</span></Clock>
            <TrayIcon $ml={20}><Notif /></TrayIcon>
          </Tray>
        </Taskbar>
      </Frame>
    </>
  );
}
